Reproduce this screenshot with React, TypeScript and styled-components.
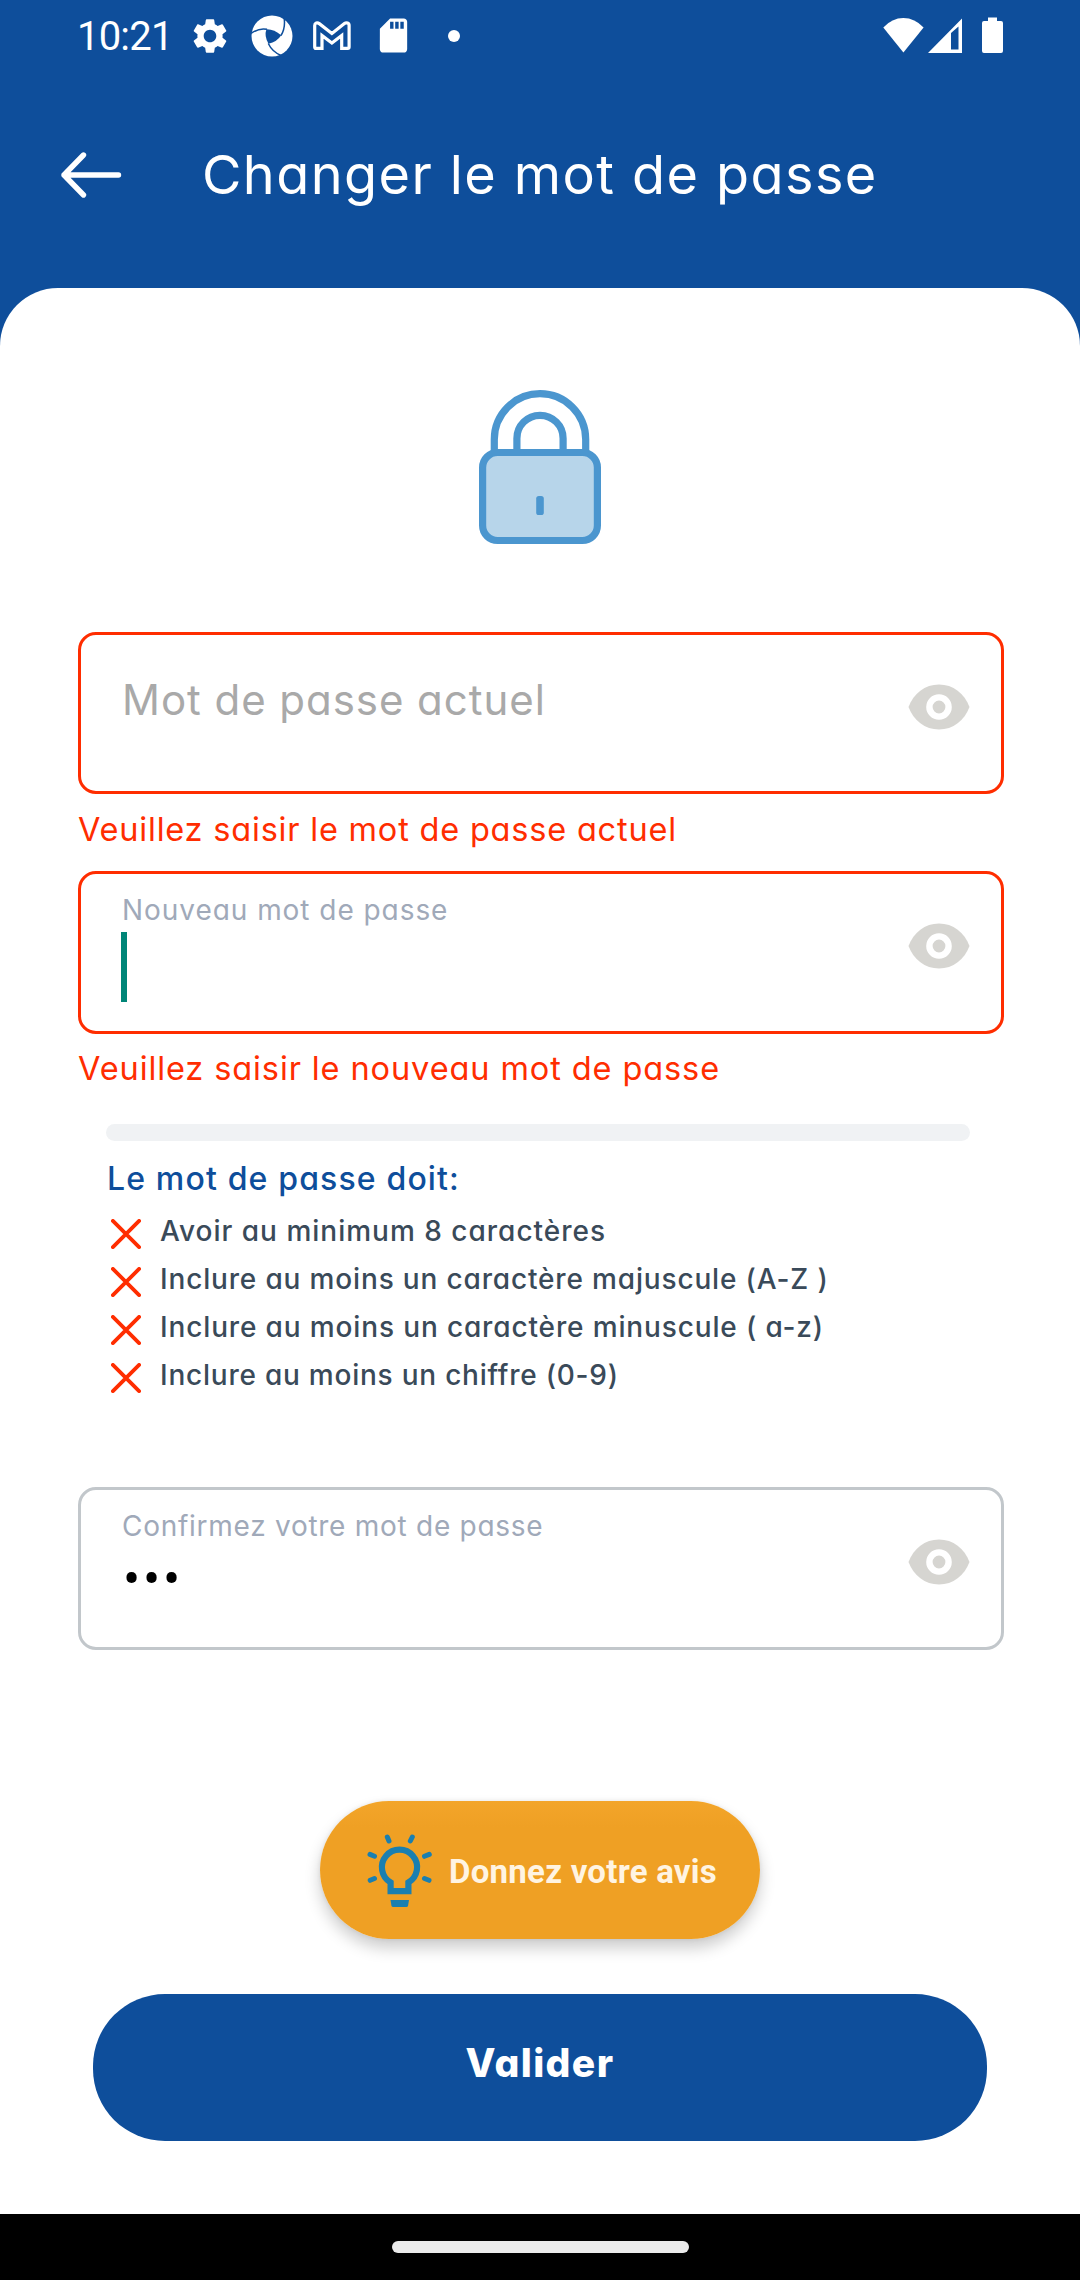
import React from "react";
import styled, { createGlobalStyle } from "styled-components";
import { MdSdCard, MdSettings } from "react-icons/md";

const BLUE = "#0e4e9b";
const RED = "#ff2d00";

const GlobalStyle = createGlobalStyle`
  * { box-sizing: border-box; }
  body { margin: 0; background: ${BLUE}; }
`;

const Screen = styled.div`
  width: 1080px;
  height: 2280px;
  display: flex;
  flex-direction: column;
  background: ${BLUE};
  overflow: hidden;
  font-family: Inter, "Open Sans", sans-serif;
  font-feature-settings: "cv11";
  white-space: nowrap;
`;

const StatusBar = styled.div`
  height: 71px;
  padding: 0 75px 0 77px;
  display: flex;
  align-items: center;
  color: #fff;
  svg { display: block; flex: none; }
`;

const Clock = styled.span`
  width: 112px;
  font: 400 40px/48px Roboto, sans-serif;
  padding-top: 2px;
  letter-spacing: -0.8px;
`;

const StatusIcon = styled.span<{ $width: number }>`
  width: ${(p) => p.$width}px;
  display: flex;
  justify-content: center;
`;

const StatusDot = styled.span`
  width: 12px;
  height: 12px;
  border-radius: 50%;
  background: #fff;
`;

const StatusRight = styled.div`
  margin-left: auto;
  display: flex;
  align-items: center;
`;

const Header = styled.header`
  height: 217px;
  display: flex;
  align-items: flex-start;
  padding: 63px 0 0 60px;
`;

const BackButton = styled.button`
  width: 62px;
  height: 82px;
  padding: 0;
  border: 0;
  background: none;
  display: flex;
  align-items: center;
`;

const Title = styled.h1<{ $spacing: number }>`
  margin: 1px 0 0 80px;
  font-size: 54px;
  line-height: 80px;
  font-weight: 400;
  color: #fff;
  letter-spacing: ${(p) => p.$spacing}px;
`;

const Card = styled.main`
  flex: none;
  height: 1926px;
  padding: 101px 76px 0 78px;
  border-radius: 58px 58px 0 0;
  background: #fff;
  display: flex;
  flex-direction: column;
`;

const LockArt = styled.div`
  height: 156px;
  display: flex;
  justify-content: center;
  margin: 0 0 87px -2px;
`;

const Field = styled.div<{ $error?: boolean; $height?: number }>`
  height: ${(p) => p.$height ?? 163}px;
  border: 3px solid ${(p) => (p.$error ? RED : "#c2c7cb")};
  border-radius: 18px;
  padding: 0 31px 0 40px;
  display: flex;
  justify-content: space-between;
  flex: none;
`;

const FieldBody = styled.div`
  display: flex;
  flex-direction: column;
  padding-top: 16px;
`;

const Placeholder = styled.span<{ $spacing: number }>`
  margin-top: 19px;
  padding-left: 1px;
  font-size: 42px;
  line-height: 60px;
  color: #a9a9a9;
  letter-spacing: ${(p) => p.$spacing}px;
`;

const Label = styled.span<{ $spacing: number }>`
  padding-left: 1px;
  font-size: 28px;
  line-height: 40px;
  color: #a0a9b9;
  letter-spacing: ${(p) => p.$spacing}px;
`;

const Caret = styled.span`
  width: 6px;
  height: 70px;
  margin-top: 2px;
  background: #008577;
`;

const Mask = styled.span`
  margin-top: 4px;
  font: 400 51px/60px Roboto, sans-serif;
  letter-spacing: 2.8px;
  padding-left: 2px;
  color: #000;
`;

const EyeButton = styled.button`
  height: 46px;
  margin-top: 49px;
  padding: 0;
  border: 0;
  background: none;
  display: flex;
`;

const ErrorText = styled.p<{ $top: number; $bottom: number; $spacing: number }>`
  margin: ${(p) => p.$top}px 0 ${(p) => p.$bottom}px;
  font-size: 32.5px;
  line-height: 48px;
  color: ${RED};
  letter-spacing: ${(p) => p.$spacing}px;
`;

const Strength = styled.div`
  width: 864px;
  height: 17px;
  margin-left: 28px;
  border-radius: 9px;
  background: #f0f2f4;
  flex: none;
`;

const Rules = styled.section`
  padding: 14px 0 88px 29px;
`;

const RulesTitle = styled.h2<{ $spacing: number }>`
  margin: 0 0 4px;
  font-size: 32px;
  line-height: 48px;
  font-weight: 500;
  color: ${BLUE};
  letter-spacing: ${(p) => p.$spacing}px;
`;

const RuleList = styled.ul`
  list-style: none;
  margin: 0;
  padding: 0;
`;

const Rule = styled.li<{ $spacing: number }>`
  height: 48px;
  display: flex;
  align-items: center;
  gap: 19px;
  padding-left: 4px;
  font-size: 28px;
  line-height: 48px;
  font-weight: 500;
  color: #3a4a59;
  letter-spacing: ${(p) => p.$spacing}px;
  svg { margin-top: 6px; flex: none; }
`;

const Feedback = styled.button`
  align-self: center;
  flex: none;
  width: 440px;
  height: 138px;
  margin: 151px 0 55px -2px;
  padding: 0 0 0 47px;
  border: 0;
  border-radius: 69px;
  display: flex;
  align-items: center;
  background: linear-gradient(#f3a52a 0, #efa024 26px);
  box-shadow: 0 9px 16px rgba(0, 0, 0, 0.2), 0 0 4px rgba(0, 0, 0, 0.08);
  svg { margin-top: 2px; }
`;

const FeedbackText = styled.span`
  margin: 3px 0 0 16px;
  font: 700 33px/40px Roboto, sans-serif;
  letter-spacing: 0.25px;
  color: #fff4e2;
`;

const Submit = styled.button<{ $spacing: number }>`
  flex: none;
  width: 894px;
  height: 147px;
  margin-left: 15px;
  padding: 0 0 9px;
  border: 0;
  border-radius: 72px;
  background: ${BLUE};
  color: #fff;
  font: 800 39px/56px Inter, sans-serif;
  font-feature-settings: "cv11";
  letter-spacing: ${(p) => p.$spacing}px;
`;

const NavBar = styled.footer`
  flex: none;
  height: 66px;
  padding-top: 27px;
  display: flex;
  justify-content: center;
  background: #000;
`;

const NavHandle = styled.span`
  width: 297px;
  height: 12px;
  border-radius: 6px;
  background: #ebebeb;
`;

const SwirlIcon = () => (
  <svg width="42" height="42" viewBox="0 0 42 42">
    <circle cx="21" cy="21" r="20.5" fill="#fff" />
    <path d="M15.4 14.3Q23 14 30.2 20.3Q26 27 17.5 28.7Q13 21 15.4 14.3Z" fill={BLUE} />
    <path d="M0 18.5Q8 12.5 16 14.3M33 2Q34.8 13 30 20.5M17.3 28.5Q21 36.5 30 40.5" fill="none" stroke={BLUE} strokeWidth="1.5" />
  </svg>
);

const MailIcon = () => (
  <svg width="38" height="29" viewBox="0 0 38 29">
    <path
      d="M1.7 26V4.5C1.7 1.8 4.3 1.1 6.3 2.6L18.9 12.4 31.4 2.6C33.4 1.1 36.1 1.8 36.1 4.5V26Q36.1 27.4 34.7 27.4H28.7V14.5L18.9 22 9 14.5V27.4H3Q1.7 27.4 1.7 26Z"
      fill="none"
      stroke="#fff"
      strokeWidth="3.2"
    />
  </svg>
);

const SignalIcons = () => (
  <svg width="122" height="38" viewBox="0 0 122 38">
    <g fill="#fff">
      <path d="M0.3 10.5Q9 1 20.4 1T40.6 10.5L20.4 35.5Z" />
      <path fillRule="evenodd" d="M45 36L79 1.5V36ZM68 16V32.5H75.5V9.5Z" />
      <path d="M105 0.5H114V4H118Q120 4 120 6V34Q120 36 118 36H101Q99 36 99 34V6Q99 4 101 4H105Z" />
    </g>
  </svg>
);

const BackArrow = () => (
  <svg width="62" height="48" viewBox="0 0 62 48">
    <path d="M58.500 24H4M23.500 4L4 24L23.500 44" fill="none" stroke="#fff" strokeWidth="5.400" strokeLinecap="round" strokeLinejoin="round" />
  </svg>
);

const LockIcon = () => (
  <svg width="124" height="156" viewBox="0 0 124 156">
    <g stroke="#4b96cf" strokeWidth="7.200">
      <path d="M16.300 62V50.400A45.700 45.700 0 0 1 107.700 50.400V62M38.900 62V49.400A23.100 23.100 0 0 1 85.100 49.400V62" fill="none" />
      <rect x="4.600" y="63.500" width="114.800" height="88" rx="15" fill="#b7d5ea" />
    </g>
    <rect x="58.200" y="107" width="7.600" height="19" rx="2.600" fill="#4b96cf" />
  </svg>
);

const EyeIcon = () => (
  <svg width="62" height="46" viewBox="0 0 62 46">
    <path d="M.5 23C5.5 9.5 17 .5 31 .5S56.500 9.500 61.500 23C56.500 36.500 45 45.500 31 45.500S5.500 36.500 .5 23Z" fill="#d6d5d1" />
    <circle cx="31" cy="23" r="9.600" fill="none" stroke="#fff" strokeWidth="6.400" />
  </svg>
);

const CrossIcon = () => (
  <svg width="30" height="30" viewBox="0 0 30 30">
    <path d="M1.900 1.900L28.100 28.100M28.100 1.900L1.900 28.100" stroke={RED} strokeWidth="3.800" strokeLinecap="round" />
  </svg>
);

const BulbIcon = () => (
  <svg width="66" height="74" viewBox="0 0 66 74">
    <g fill="none" stroke="#1a7fb0" strokeWidth="6.200">
      <path d="M23.600 57.200V48.500A17.600 17.600 0 1 1 41.400 48.500V57.200Z" />
      <path
        d="M20.300 3L22 7M45.300 3L43.300 7M3 20.400L7.500 22.200M62.300 20.400L57.500 22.300M3.200 46.300L7.500 44.500M62 46.300L57.500 44.500"
        strokeWidth="5"
        strokeLinecap="round"
      />
    </g>
    <path d="M23.500 66H42L41 72Q40.500 73 39.500 73H26Q25 73 24.500 72Z" fill="#1a7fb0" />
  </svg>
);

const Eye = () => (
  <EyeButton type="button" aria-label="Afficher">
    <EyeIcon />
  </EyeButton>
);

const rules = [
  { text: "Avoir au minimum 8 caractères", spacing: 1 },
  { text: "Inclure au moins un caractère majuscule (A-Z )", spacing: 0.84 },
  { text: "Inclure au moins un caractère minuscule ( a-z)", spacing: 0.86 },
  { text: "Inclure au moins un chiffre (0-9)", spacing: 0.77 },
];

export default function App() {
  return (
    <>
      <GlobalStyle />
      <Screen>
        <StatusBar>
          <Clock>10:21</Clock>
          <StatusIcon $width={42}><MdSettings size={42} /></StatusIcon>
          <StatusIcon $width={81}><SwirlIcon /></StatusIcon>
          <StatusIcon $width={40}><MailIcon /></StatusIcon>
          <StatusIcon $width={82}><MdSdCard size={41} /></StatusIcon>
          <StatusIcon $width={40}><StatusDot /></StatusIcon>
          <StatusRight>
            <SignalIcons />
          </StatusRight>
        </StatusBar>
        <Header>
          <BackButton type="button" aria-label="Retour"><BackArrow /></BackButton>
          <Title $spacing={1.42}>Changer le mot de passe</Title>
        </Header>
        <Card>
          <LockArt><LockIcon /></LockArt>

          <Field $error $height={162}>
            <FieldBody>
              <Placeholder $spacing={0.95}>Mot de passe actuel</Placeholder>
            </FieldBody>
            <Eye />
          </Field>
          <ErrorText $top={12} $bottom={17} $spacing={0.8}>Veuillez saisir le mot de passe actuel</ErrorText>

          <Field $error>
            <FieldBody>
              <Label $spacing={0.95}>Nouveau mot de passe</Label>
              <Caret />
            </FieldBody>
            <Eye />
          </Field>
          <ErrorText $top={11} $bottom={31} $spacing={0.9}>Veuillez saisir le nouveau mot de passe</ErrorText>

          <Strength />
          <Rules>
            <RulesTitle $spacing={1.15}>Le mot de passe doit:</RulesTitle>
            <RuleList>
              {rules.map((rule) => (
                <Rule key={rule.text} $spacing={rule.spacing}>
                  <CrossIcon />
                  <span>{rule.text}</span>
                </Rule>
              ))}
            </RuleList>
          </Rules>

          <Field>
            <FieldBody>
              <Label $spacing={0.73}>Confirmez votre mot de passe</Label>
              <Mask>•••</Mask>
            </FieldBody>
            <Eye />
          </Field>

          <Feedback type="button">
            <BulbIcon />
            <FeedbackText>Donnez votre avis</FeedbackText>
          </Feedback>
          <Submit type="button" $spacing={1.4}>Valider</Submit>
        </Card>
        <NavBar><NavHandle /></NavBar>
      </Screen>
    </>
  );
}
